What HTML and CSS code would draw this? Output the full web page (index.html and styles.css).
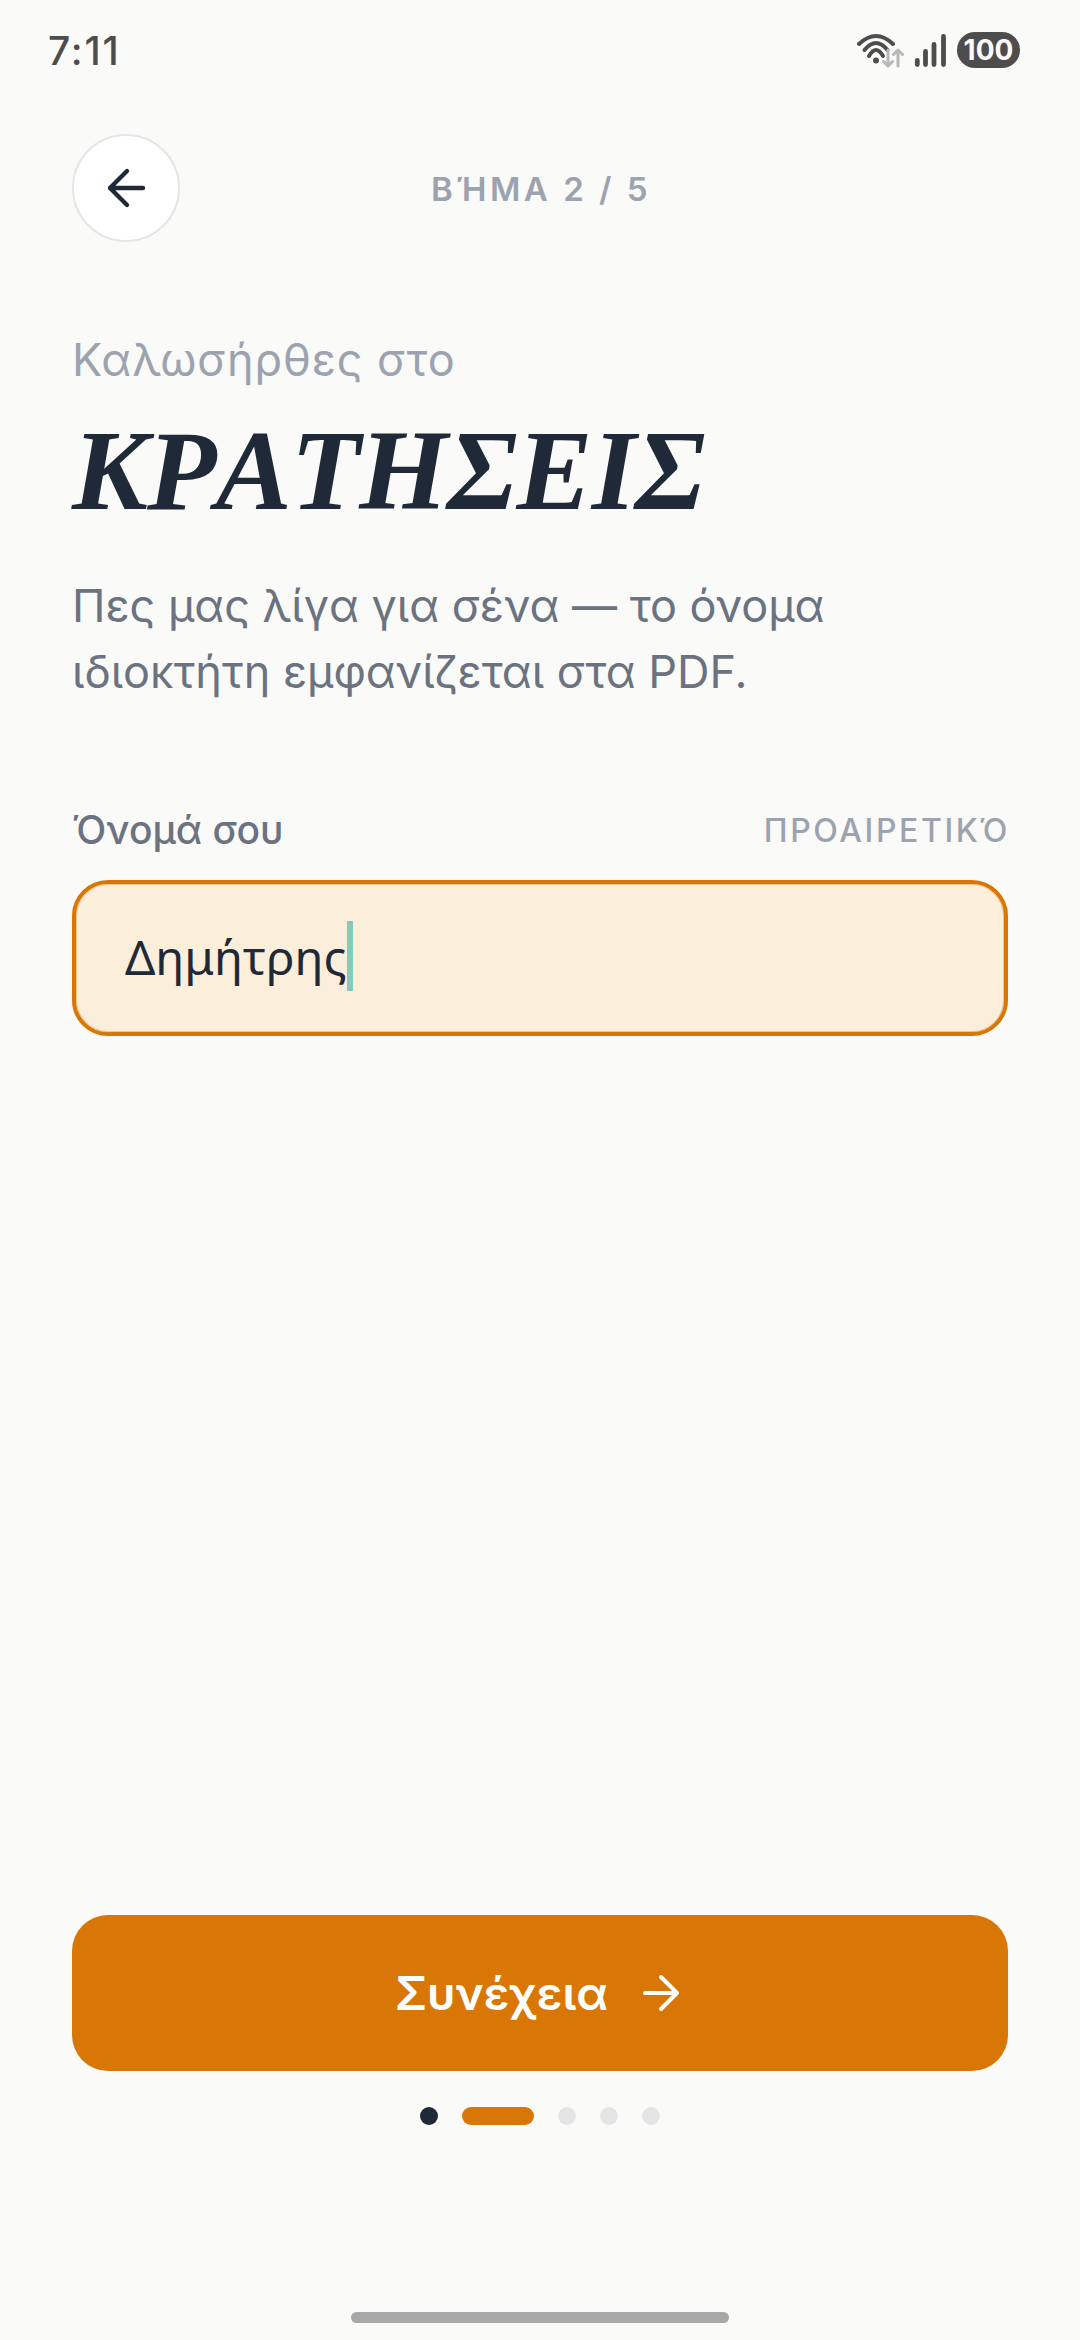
FILE: index.html
```html
<!DOCTYPE html>
<html lang="el">
<head>
<meta charset="utf-8">
<title>Κρατήσεις</title>
<link rel="stylesheet" href="styles.css">
</head>
<body>
<div class="screen">
  <div class="status">
    <span class="time">7:11</span>
    <div class="status-icons">
      <svg class="wifi" width="48" height="36" viewBox="0 0 48 36" fill="none">
        <path d="M3 12Q20 -4 37 12" stroke="#4d4d4d" stroke-width="4" stroke-linecap="round"/>
        <path d="M8.500 18Q20 4 31.500 18" stroke="#4d4d4d" stroke-width="4" stroke-linecap="round"/>
        <path d="M13 24Q20 12 27 24" stroke="#4d4d4d" stroke-width="4" stroke-linecap="round"/>
        <circle cx="20" cy="28.500" r="3" fill="#4d4d4d"/>
        <path d="M32 18V34M27.500 29.500L32 34L36.500 29.500" stroke="#b8b8b8" stroke-width="3" stroke-linecap="round" stroke-linejoin="round"/>
        <path d="M42 34V18M37.500 22.500L42 18L46.500 22.500" stroke="#b8b8b8" stroke-width="3" stroke-linecap="round" stroke-linejoin="round"/>
      </svg>
      <svg class="signal" width="33" height="36" viewBox="0 0 33 36" fill="none">
        <path d="M3.300 28.400V32.600M11.500 19.400V32.600M20 12.400V32.600M29.500 4.400V32.600" stroke="#4d4d4d" stroke-width="4.800" stroke-linecap="round"/>
      </svg>
      <span class="battery">100</span>
    </div>
  </div>

  <main class="content">
    <header class="topbar">
      <button class="back" aria-label="Πίσω">
        <svg width="48" height="48" viewBox="0 0 48 48" fill="none">
          <path d="M41 24H8M25 7L8 24L25 41" stroke="#1f2937" stroke-width="4.400" stroke-linecap="round" stroke-linejoin="round"/>
        </svg>
      </button>
      <span class="step">ΒΉΜΑ 2 / 5</span>
    </header>

    <p class="welcome">Καλωσήρθες στο</p>
    <h1 class="brand">ΚΡΑΤΗΣΕΙΣ</h1>
    <p class="intro">Πες μας λίγα για σένα — το όνομα<br>ιδιοκτήτη εμφανίζεται στα PDF.</p>

    <div class="field-head">
      <span class="field-label">Όνομά σου</span>
      <span class="field-opt">ΠΡΟΑΙΡΕΤΙΚΌ</span>
    </div>
    <div class="input"><span>Δημήτρης</span><i class="caret"></i></div>

    <div class="spacer"></div>

    <button class="cta">
      <span>Συνέχεια</span>
      <svg width="48" height="48" viewBox="0 0 48 48" fill="none">
        <path d="M8 24H40M24 8L40 24L24 40" stroke="#fff" stroke-width="4" stroke-linecap="round" stroke-linejoin="round"/>
      </svg>
    </button>

    <div class="dots">
      <i class="dot done"></i>
      <i class="dot active"></i>
      <i class="dot"></i>
      <i class="dot"></i>
      <i class="dot"></i>
    </div>
  </main>

  <div class="home"></div>
</div>
</body>
</html>
```
FILE: styles.css
```css
* { box-sizing: border-box; }
html, body { margin: 0; padding: 0; }
body { background: #fafaf8; font-family: Inter, "Noto Sans", sans-serif; }
.screen { width: 1080px; height: 2340px; display: flex; flex-direction: column; background: #fafaf8; }
.status { height: 100px; flex: none; padding: 0 60px 0 48px; display: flex; align-items: center; justify-content: space-between; }
.time { font-family: Inter, sans-serif; font-size: 39px; font-weight: 500; color: #4d4d4d; letter-spacing: 1.800px; }
.status-icons { display: flex; align-items: center; gap: 10px; }
.battery { width: 63px; height: 36px; border-radius: 18px; background: #4d4d4d; color: #fafafa; font-family: Inter, sans-serif; font-weight: 700; font-size: 28px; display: flex; align-items: center; justify-content: center; }
.content { flex: 1; display: flex; flex-direction: column; padding: 34px 72px 0; min-height: 0; }
.topbar { position: relative; height: 108px; display: flex; align-items: center; justify-content: center; }
.back { position: absolute; left: 0; top: 0; width: 108px; height: 108px; border-radius: 50%; border: 2px solid #e5e5e5; background: #fff; padding: 0; display: flex; align-items: center; justify-content: center; }
.step { font-size: 33px; font-weight: 600; letter-spacing: 3.500px; color: #9ca3af; margin-left: 2px; padding-top: 2px; }
.welcome { margin: 91px 0 0; font-size: 45px; line-height: 54px; color: #9ca3af; letter-spacing: .9px; }
.brand { margin: 24px 0 0; font-family: "Liberation Serif", serif; font-style: italic; font-weight: 700; font-size: 114px; line-height: 120px; color: #1f2937; font-kerning: none; letter-spacing: -1px; }
.intro { margin: 42px 0 0; font-size: 45px; line-height: 66px; color: #6b7280; }
.field-head { margin-top: 100px; display: flex; justify-content: space-between; align-items: center; height: 48px; }
.field-label { font-size: 39px; font-weight: 500; color: #6b7280; }
.field-opt { font-size: 32px; font-weight: 500; color: #9ca3af; letter-spacing: 2.600px; margin-right: -2px; padding-top: 2px; }
.input { margin-top: 27px; height: 156px; border: 4px solid #d97706; border-radius: 36px; background: #fbeedb; box-shadow: inset 0 0 0 1px rgba(217, 119, 6, .35); display: flex; align-items: center; padding: 0 0 4px 49px; font-family: "Noto Sans", sans-serif; font-size: 47.500px; color: #1f2937; }
.caret { width: 6px; height: 70px; background: #86cabc; }
.spacer { flex: 1; }
.cta { height: 156px; flex: none; border: 0; border-radius: 36px; background: #d97706; color: #fff; font-family: Inter, sans-serif; font-size: 46.500px; font-weight: 600; display: flex; align-items: center; justify-content: center; gap: 29px; padding: 0; }
.dots { margin-top: 36px; margin-bottom: 215px; display: flex; justify-content: center; gap: 24px; }
.dot { width: 18px; height: 18px; border-radius: 9px; background: #e5e5e5; }
.dot.done { background: #1f2937; }
.dot.active { width: 72px; background: #d97706; }
.home { position: fixed; left: 351px; top: 2312px; width: 378px; height: 11px; border-radius: 6px; background: #a8a8a8; }
```
